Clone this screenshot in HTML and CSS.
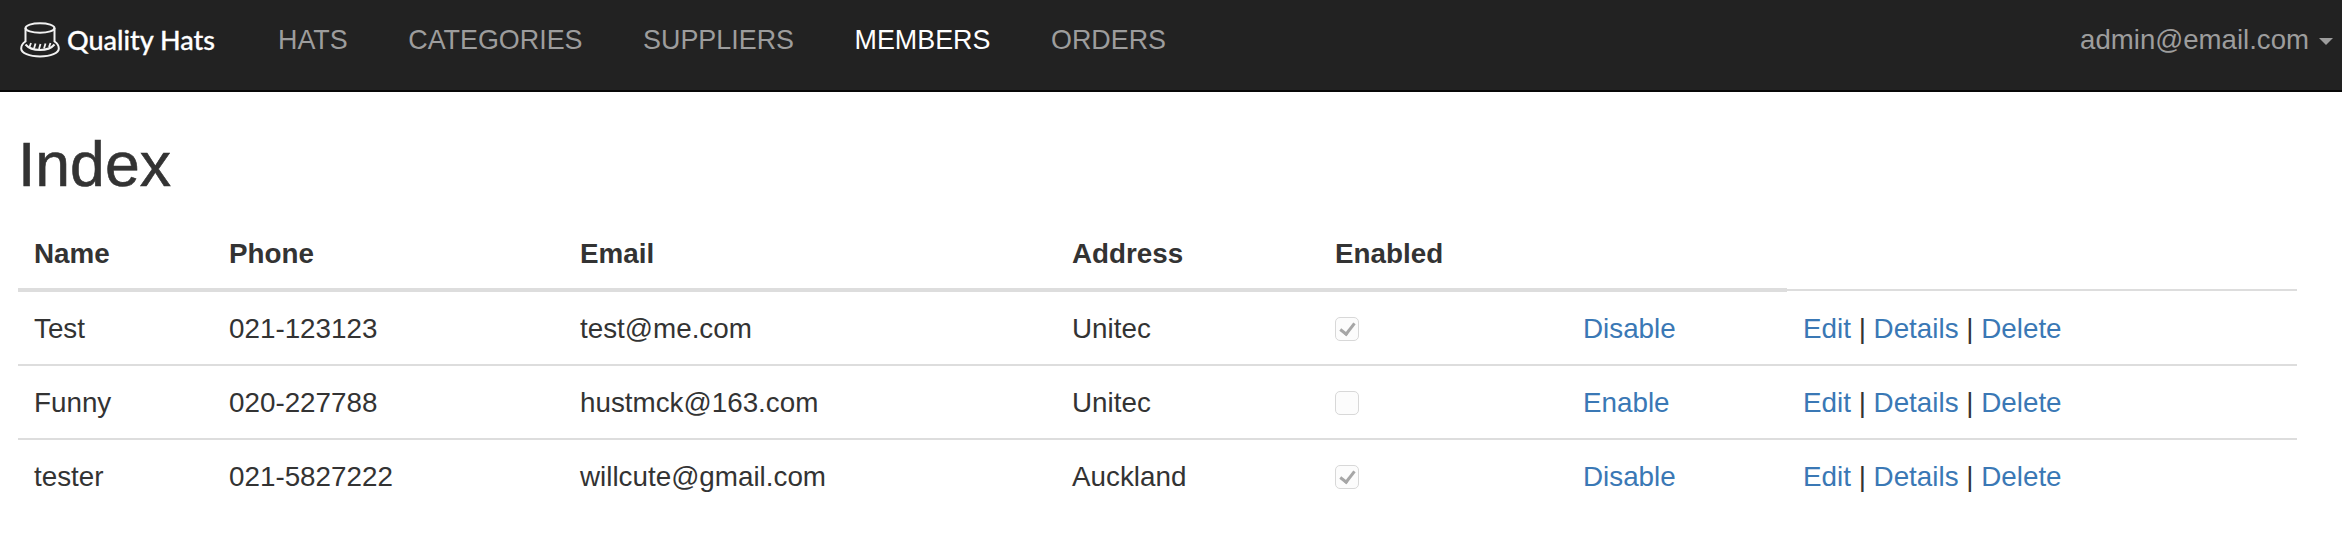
FILE: index.html
```html
<!DOCTYPE html>
<html lang="en">
<head>
    <meta charset="UTF-8">
    <title>Index - Quality Hats</title>
    <link rel="stylesheet" href="styles.css">
</head>
<body>
    <nav class="navbar">
        <a class="brand" href="#">
            <svg class="brand-icon" viewBox="0 0 40 36" width="40" height="36" fill="none" stroke="#f2f2f2" stroke-width="2">
                <ellipse cx="20" cy="6" rx="14.500" ry="4.800"/>
                <path d="M5.500 6v14M34.500 6v14"/>
                <path d="M5.500 19.500C3 21 1.200 23.500 1.200 26.500c0 4.500 8 8 18.800 8s18.800-3.500 18.800-8c0-3-1.800-5.500-4.300-7"/>
                <path d="M5.500 22.500c3 3.500 8 5.500 14.500 5.500s11.500-2 14.500-5.500"/>
                <path d="M11 21l-1.500 4M15.500 21.500l-1.500 5M20.500 22l-1.500 5M25.500 21.500l-1.500 5M30.500 21l-1.500 4" stroke-width="1.800"/>
            </svg>
            <span class="brand-name">Quality Hats</span>
        </a>
        <ul class="nav-links">
            <li><a href="#">HATS</a></li>
            <li><a href="#">CATEGORIES</a></li>
            <li><a href="#">SUPPLIERS</a></li>
            <li><a class="active" href="#">MEMBERS</a></li>
            <li><a href="#">ORDERS</a></li>
        </ul>
        <a class="user-menu" href="#">admin@email.com<span class="caret"></span></a>
    </nav>

    <div class="content">
        <h1>Index</h1>
        <table class="members">
            <thead>
                <tr>
                    <th class="col-name">Name</th>
                    <th class="col-phone">Phone</th>
                    <th class="col-email">Email</th>
                    <th class="col-address">Address</th>
                    <th class="col-enabled">Enabled</th>
                    <th class="col-toggle"></th>
                    <td class="col-actions"></td>
                </tr>
            </thead>
            <tbody>
                <tr>
                    <td>Test</td>
                    <td>021-123123</td>
                    <td>test@me.com</td>
                    <td>Unitec</td>
                    <td><input class="check" type="checkbox" checked disabled></td>
                    <td><a href="#">Disable</a></td>
                    <td><a href="#">Edit</a> | <a href="#">Details</a> | <a href="#">Delete</a></td>
                </tr>
                <tr>
                    <td>Funny</td>
                    <td>020-227788</td>
                    <td>hustmck@163.com</td>
                    <td>Unitec</td>
                    <td><input class="check" type="checkbox" disabled></td>
                    <td><a href="#">Enable</a></td>
                    <td><a href="#">Edit</a> | <a href="#">Details</a> | <a href="#">Delete</a></td>
                </tr>
                <tr>
                    <td>tester</td>
                    <td>021-5827222</td>
                    <td>willcute@gmail.com</td>
                    <td>Auckland</td>
                    <td><input class="check" type="checkbox" checked disabled></td>
                    <td><a href="#">Disable</a></td>
                    <td><a href="#">Edit</a> | <a href="#">Details</a> | <a href="#">Delete</a></td>
                </tr>
            </tbody>
        </table>
    </div>
</body>
</html>
```

FILE: styles.css
```css
body {
    margin: 0;
    font-family: "Liberation Sans", Arial, sans-serif;
    font-size: 27.8px;
    color: #333;
    background: #fff;
}
a {
    text-decoration: none;
}

.navbar {
    display: flex;
    align-items: center;
    box-sizing: border-box;
    height: 92px;
    padding: 0 9px 10px 20px;
    background: #222;
    border-bottom: 2px solid #080808;
}
.brand {
    display: flex;
    align-items: center;
    gap: 7px;
    width: 258px;
    color: #fff;
}
.brand-icon {
    flex: none;
}
.brand-name {
    margin-top: -2px;
    font-family: Lato, sans-serif;
    font-size: 27px;
    font-weight: 500;
    -webkit-text-stroke: 0.3px #fff;
}
.nav-links {
    display: flex;
    gap: 60.5px;
    flex: 1;
    margin: 0;
    padding: 0;
    font-size: 26.9px;
    list-style: none;
}
.nav-links a, .user-menu {
    color: #9d9d9d;
}
.nav-links a.active {
    color: #fff;
}
.user-menu {
    font-size: 27.6px;
}
.caret {
    display: inline-block;
    margin-left: 10px;
    vertical-align: middle;
    border-top: 7px solid #9d9d9d;
    border-left: 7px solid transparent;
    border-right: 7px solid transparent;
}

.content {
    padding: 0 45px 0 18px;
}
h1 {
    margin: 39px 0 20px;
    font-size: 62.5px;
    font-weight: 500;
    line-height: 66px;
    -webkit-text-stroke: 0.6px #333;
}

.members {
    width: 100%;
    border-collapse: collapse;
    table-layout: fixed;
}
.members th, .members td {
    height: 70px;
    padding: 2px 16px 0;
    text-align: left;
    border-top: 2px solid #ddd;
}
.members thead th, .members thead td {
    border-top: 0;
}
.members thead th {
    height: 65px;
    border-bottom: 4px solid #ddd;
}
.members thead td {
    border-bottom: 2px solid #ddd;
}
.members a {
    color: #3a78b5;
}
.col-name { width: 163px; }
.col-phone { width: 319px; }
.col-email { width: 460px; }
.col-address { width: 231px; }
.col-enabled { width: 216px; }
.col-toggle { width: 188px; }

.check {
    appearance: none;
    display: block;
    position: relative;
    box-sizing: border-box;
    width: 24px;
    height: 24px;
    margin: 0;
    background: #fcfcfc;
    border: 1.5px solid #d8d8d8;
    border-radius: 5px;
}
/* tick drawn with two borders of a rotated box */
.check:checked::after {
    content: "";
    position: absolute;
    left: 6.5px;
    top: 2px;
    width: 6px;
    height: 12px;
    border-right: 3px solid #a6a6a6;
    border-bottom: 3px solid #a6a6a6;
    transform: rotate(38deg);
}
```
